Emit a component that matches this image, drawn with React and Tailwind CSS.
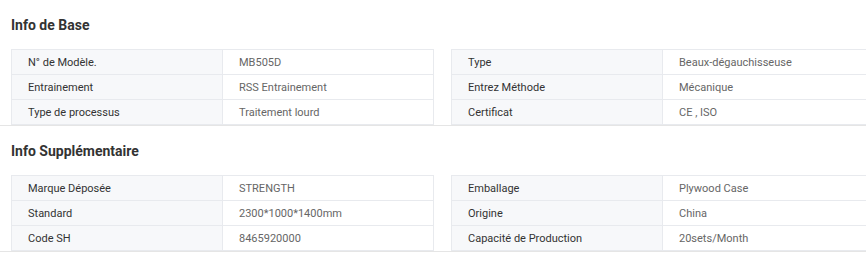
import React from 'react'

const sections = [
  {
    title: 'Info de Base',
    left: [
      ['N° de Modèle.', 'MB505D'],
      ['Entrainement', 'RSS Entrainement'],
      ['Type de processus', 'Traitement lourd'],
    ],
    right: [
      ['Type', 'Beaux-dégauchisseuse'],
      ['Entrez Méthode', 'Mécanique'],
      ['Certificat', 'CE , ISO'],
    ],
  },
  {
    title: 'Info Supplémentaire',
    left: [
      ['Marque Déposée', 'STRENGTH'],
      ['Standard', '2300*1000*1400mm'],
      ['Code SH', '8465920000'],
    ],
    right: [
      ['Emballage', 'Plywood Case'],
      ['Origine', 'China'],
      ['Capacité de Production', '20sets/Month'],
    ],
  },
]

const Table = ({ rows }) => (
  <div className="w-[423px] shrink-0 border-t border-x border-[#e8eaee]">
    {rows.map(([k, v]) => (
      <div key={k} className="flex h-[25px] border-b border-[#e8eaee] text-[11px] leading-[25px]">
        <div className="w-[211px] bg-[#f7f8fa] border-r border-[#e8eaee] pl-4 text-[#333]">{k}</div>
        <div className="flex-1 pl-4 text-[#666]">{v}</div>
      </div>
    ))}
  </div>
)

export default function App() {
  return (
    <div className="bg-white w-[866px] overflow-hidden" style={{ fontFamily: 'Roboto, "Liberation Sans", sans-serif' }}>
      {sections.map((s) => (
        <section key={s.title} className="h-[126px] overflow-hidden border-b border-[#e5e5e5] pl-[11px]">
          <h2 className="pt-[15px] h-[49px] text-[14px] font-bold leading-[20px] text-[#333]">{s.title}</h2>
          <div className="flex gap-[17px]">
            <Table rows={s.left} />
            <Table rows={s.right} />
          </div>
        </section>
      ))}
    </div>
  )
}
